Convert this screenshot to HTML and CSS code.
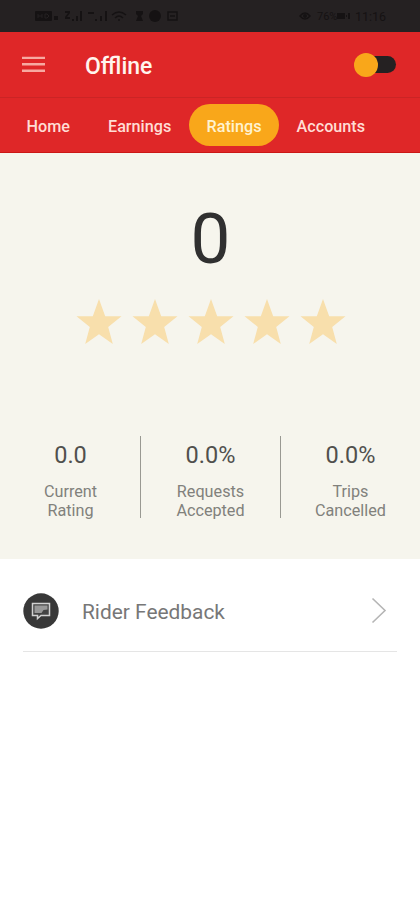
FILE: index.html
```html
<!DOCTYPE html>
<html lang="en">
<head>
    <title>Ratings</title>
    <meta charset="UTF-8">
    <meta name="viewport" content="width=device-width, initial-scale=1">
    <link rel="stylesheet" href="styles.css">
</head>
<body>
    <div class="status-bar">
        <svg class="status-icons" width="146" height="14" viewBox="0 0 146 14">
            <rect x="0" y="2" width="17" height="10" rx="1"/>
            <path class="line" d="M3 5v4M7 5v4M3 7h4M10 5v4h2l2-2-2-2z"/>
            <path d="M19 7h4v4h-4zM30 2h5v2l-3 4h3v2h-5V8l3-4h-3zM37 10h2v2h-2zM41 7h2v5h-2zM45 2h2v10h-2z"/>
            <path d="M53 3h6v2h-6zM60 10h2v2h-2zM65 7h2v5h-2zM70 2h2v10h-2z"/>
            <path class="arc" d="M77 6q7-6 14 0M80 9q4-4 8 0M83 11h2"/>
            <path d="M101 2h7v3l-2 2 2 5h-7l2-5-2-2z"/>
            <circle cx="120" cy="7" r="6"/>
            <path class="arc" d="M133 3h9v8h-9zM135 7h5"/>
        </svg>
        <div class="status-right">
            <svg width="12" height="10" viewBox="0 0 12 10">
                <path class="arc" d="M1 5q5-6 10 0q-5 6-10 0z"/>
                <circle cx="6" cy="5" r="2"/>
            </svg>
            <span class="battery-text">76%</span>
            <svg width="13" height="8" viewBox="0 0 13 8">
                <path d="M0 1h8v6H0zM9 3h1v2H9zM11 1h2v6h-2z"/>
            </svg>
            <span class="clock">11:16</span>
        </div>
    </div>

    <header class="header">
        <svg class="menu" width="23" height="17" viewBox="0 0 23 17">
            <path d="M0 1.9h23M0 8.3h23M0 14.8h23"/>
        </svg>
        <h1 class="title">Offline</h1>
        <div class="toggle"><span class="knob"></span></div>
    </header>

    <nav class="tabs">
        <a class="tab home">Home</a>
        <a class="tab earnings">Earnings</a>
        <a class="tab active">Ratings</a>
        <a class="tab accounts">Accounts</a>
    </nav>

    <main>
        <section class="summary">
            <div class="score">0</div>
            <div class="stars">
                <svg class="star" viewBox="0 0 46 46"><path d="M23 0l6.2 17.3H45.500L32.200 27.900 36.800 45 23 35.200 9.200 45l4.600-17.100L0.500 17.300h16.300z"/></svg>
                <svg class="star" viewBox="0 0 46 46"><path d="M23 0l6.2 17.3H45.500L32.200 27.900 36.800 45 23 35.200 9.200 45l4.600-17.100L0.500 17.300h16.300z"/></svg>
                <svg class="star" viewBox="0 0 46 46"><path d="M23 0l6.2 17.3H45.500L32.200 27.900 36.800 45 23 35.200 9.200 45l4.600-17.100L0.500 17.300h16.300z"/></svg>
                <svg class="star" viewBox="0 0 46 46"><path d="M23 0l6.2 17.3H45.500L32.200 27.900 36.800 45 23 35.200 9.200 45l4.600-17.100L0.500 17.300h16.300z"/></svg>
                <svg class="star" viewBox="0 0 46 46"><path d="M23 0l6.2 17.3H45.500L32.200 27.900 36.800 45 23 35.200 9.200 45l4.600-17.100L0.500 17.300h16.300z"/></svg>
            </div>
            <div class="stats">
                <div class="stat">
                    <div class="value">0.0</div>
                    <div class="label">Current<br>Rating</div>
                </div>
                <div class="stat">
                    <div class="value">0.0%</div>
                    <div class="label">Requests<br>Accepted</div>
                </div>
                <div class="stat">
                    <div class="value">0.0%</div>
                    <div class="label">Trips<br>Cancelled</div>
                </div>
            </div>
        </section>

        <a class="feedback">
            <svg class="feedback-icon" width="36" height="36" viewBox="0 0 36 36">
                <circle cx="18" cy="18" r="17.7" fill="#383838"/>
                <path d="M9.500 10.500h17v12H18l-3.500 3v-3h-5z" fill="#444" stroke="#d2d2d2" stroke-width="1.500"/>
                <path d="M11.500 12.500h13v4l-4 .5-2 3h-7z" fill="#999"/>
            </svg>
            <span class="feedback-text">Rider Feedback</span>
            <svg class="chevron" width="16" height="27" viewBox="0 0 16 27">
                <path d="M1.500 1.500L14 13.500 1.500 25.500"/>
            </svg>
        </a>
    </main>
</body>
</html>
```
FILE: styles.css
```css
* { box-sizing: border-box; }
body { margin: 0; background: #fff; font-family: Roboto, Arial, sans-serif; }
svg { display: block; }

.status-bar { display: flex; justify-content: space-between; align-items: center; height: 32px; padding: 0 34px 0 35px; background: #252122; color: #151213; fill: #151213; }
.status-bar .line { fill: none; stroke: #252122; }
.status-bar .arc { fill: none; stroke: #151213; stroke-width: 1.5; }
.status-right { display: flex; align-items: center; }
.battery-text { margin-left: 6px; font-size: 11px; width: 20px; }
.clock { margin-left: 5px; font-size: 12.5px; width: 31px; }

.header { display: flex; align-items: center; height: 66px; padding: 0 24px 0 22px; background: #df2728; border-bottom: 1px solid #cb2425; }
.menu { stroke: #f7a9a1; stroke-width: 2.4; }
.title { margin: 3px 0 0 40px; font-size: 23px; font-weight: 500; color: #fff5ee; }
.toggle { display: flex; align-items: center; width: 34px; height: 17px; margin-left: auto; border-radius: 9px; background: #252122; }
.knob { width: 24px; height: 24px; margin-left: -8px; border-radius: 50%; background: #f9a71a; flex: none; }

.tabs { display: flex; align-items: center; height: 55px; background: #df2728; border-bottom: 1px solid #cb1715; }
.tab { height: 42px; padding-top: 2px; font-size: 16.2px; font-weight: 500; color: #ffddd5; line-height: 42px; white-space: nowrap; }
.home { margin-left: 26.5px; width: 81.5px; }
.earnings { width: 81px; }
.active { width: 90px; border-radius: 21px; background: #f9a71a; color: #fff3d0; text-align: center; }
.accounts { margin-left: 17.5px; }

.summary { height: 406px; padding: 44px 0 0; background: #f6f5ed; }
.score { height: 84px; line-height: 84px; font-size: 71px; text-align: center; color: #303030; padding-left: 1px; }
.stars { display: flex; justify-content: center; gap: 10px; margin-top: 18px; padding-left: 1px; }
.star { width: 46px; height: 46px; fill: #f8dfac; }
.stats { display: flex; height: 82px; margin-top: 91px; padding-left: 1px; }
.stat { flex: 1; text-align: center; }
.stat + .stat { border-left: 1px solid #999992; }
.value { padding-top: 5px; font-size: 23.5px; line-height: 28px; color: #50504d; }
.label { margin-top: 13px; font-size: 16.2px; line-height: 19px; color: #81817c; }

.feedback { display: flex; align-items: center; height: 93px; margin: 0 23px; border-bottom: 1px solid #e5e5e5; padding-top: 13px; }
.feedback-icon { margin-top: -2px; }
.feedback-text { margin-left: 23px; font-size: 20.9px; color: #777; }
.chevron { margin: -2px 10px 0 auto; fill: none; stroke: #b5b5b5; stroke-width: 1.6; }
```
